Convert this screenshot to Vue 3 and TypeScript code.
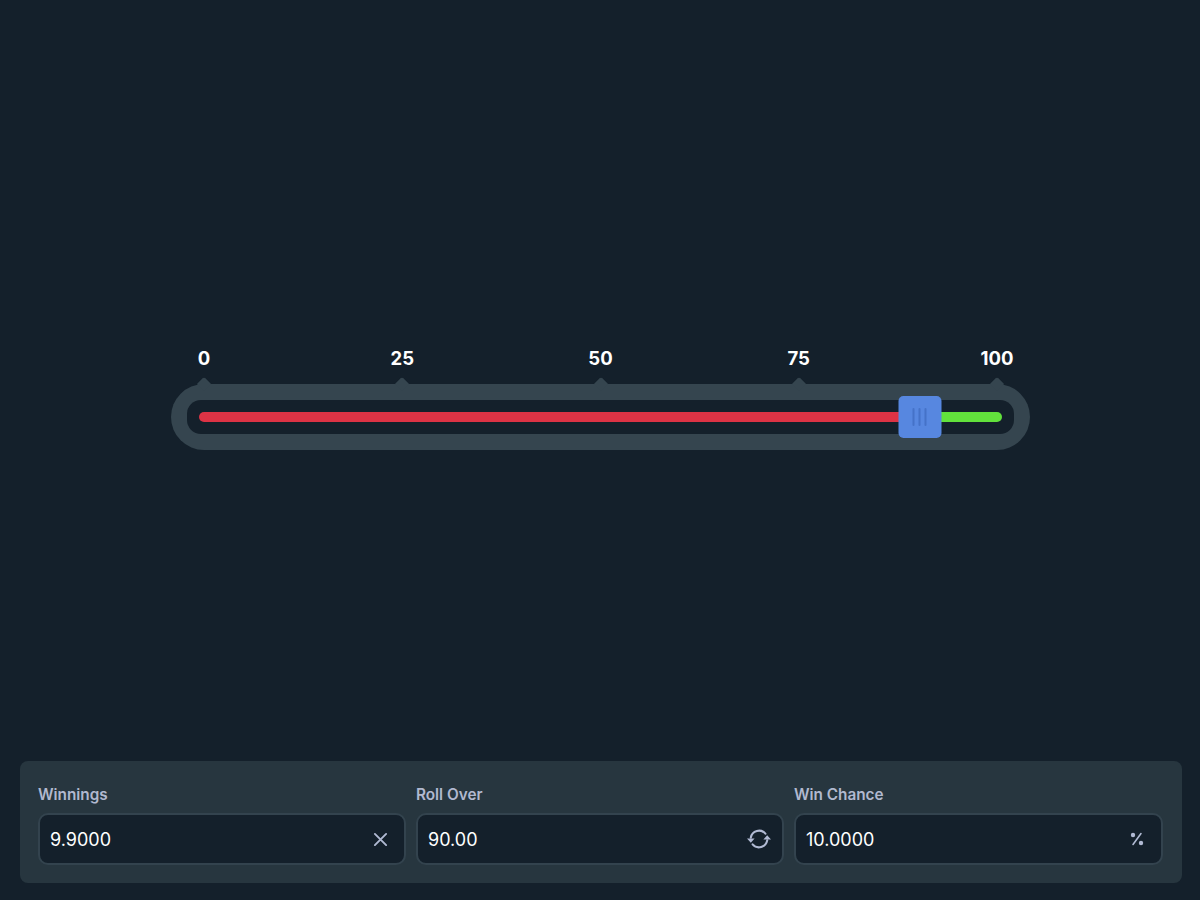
<script setup lang="ts">
const ticks: number[] = [0, 25, 50, 75, 100]
const rollOver = 90
const handlePosition = rollOver * 0.9972
const fields = [
  { label: 'Winnings', value: '9.9000', icon: 'times' },
  { label: 'Roll Over', value: '90.00', icon: 'sync' },
  { label: 'Win Chance', value: '10.0000', icon: 'percent' },
]
</script>

<template>
  <div class="page">
    <main class="game">
      <div class="scale">
        <div v-for="t in ticks" :key="t" class="tick">
          <span class="tick-label">{{ t }}</span>
          <span class="tick-mark"></span>
        </div>
      </div>
      <div class="ring">
        <div class="groove">
          <div class="track">
            <div class="lose" :style="{ flexGrow: rollOver }"></div>
            <div class="win" :style="{ flexGrow: 100 - rollOver }"></div>
            <div class="handle" :style="{ left: handlePosition + '%' }">
              <i></i><i></i><i></i>
            </div>
          </div>
        </div>
      </div>
    </main>
    <section class="panel">
      <div v-for="f in fields" :key="f.label" class="field">
        <label class="field-label">{{ f.label }}</label>
        <div class="input">
          <span class="value">{{ f.value }}</span>
          <svg v-if="f.icon === 'times'" class="icon" viewBox="0 0 16 16" fill="none" stroke="currentColor" stroke-width="2" stroke-linecap="round">
            <path d="M2 2l12 12M14 2L2 14" />
          </svg>
          <svg v-else-if="f.icon === 'sync'" class="icon sync" viewBox="0 0 24 24" fill="none">
            <path d="M3.8 10.6A8.4 8.4 0 0 1 18.4 6.6" stroke="currentColor" stroke-width="2.1" stroke-linecap="round" />
            <path d="M20.2 13.4A8.4 8.4 0 0 1 5.6 17.4" stroke="currentColor" stroke-width="2.1" stroke-linecap="round" />
            <path d="M0 11.4h7.6L3.8 15.8zM24 12.6h-7.6l3.8-4.4z" fill="currentColor" />
          </svg>
          <svg v-else class="icon percent" viewBox="0 0 14 14" fill="none">
            <circle cx="3" cy="3" r="2.2" fill="currentColor" />
            <circle cx="11" cy="11" r="2.2" fill="currentColor" />
            <path d="M11 1.6L3 12.4" stroke="currentColor" stroke-width="1.6" stroke-linecap="round" />
          </svg>
        </div>
      </div>
    </section>
  </div>
</template>

<style>
html, body { margin: 0; background: #14202b; }
</style>

<style scoped>
.page {
  box-sizing: border-box;
  width: 1200px;
  height: 900px;
  display: flex;
  flex-direction: column;
  background: #14202b;
  padding: 0 18px 17px 20px;
  font-family: Inter, "Open Sans", sans-serif;
}
.game {
  flex: 1;
  padding: 347px 152px 0 151px;
  display: flex;
  flex-direction: column;
}
.scale {
  display: flex;
  justify-content: space-between;
  padding: 0 33px;
}
.tick {
  width: 0;
  display: flex;
  flex-direction: column;
  align-items: center;
  position: relative;
  height: 37px;
}
.tick-label {
  font-size: 18.5px;
  line-height: 22px;
  font-weight: 700;
  color: #fff;
  white-space: nowrap;
}
.tick-mark {
  position: absolute;
  bottom: -5px;
  width: 10px;
  height: 10px;
  background: #35454f;
  border-radius: 2px 0 0 0;
  transform: rotate(45deg);
}
.ring {
  background: #35454f;
  height: 66px;
  border-radius: 33px;
  padding: 16px;
  box-sizing: border-box;
}
.groove {
  height: 34px;
  background: #14202b;
  border-radius: 14px;
  padding: 12px;
  box-sizing: border-box;
}
.track {
  position: relative;
  height: 10px;
  display: flex;
  border-radius: 5px;
}
.lose {
  flex: 1 1 0;
  background: #dd3345;
  border-radius: 5px 0 0 5px;
}
.win {
  flex: 1 1 0;
  background: #62e23c;
  border-radius: 0 5px 5px 0;
}
.handle {
  position: absolute;
  top: -16px;
  width: 43px;
  height: 42px;
  transform: translateX(-50%);
  background: #5787e0;
  border-radius: 5px;
  display: flex;
  justify-content: center;
  align-items: center;
  gap: 4px;
}
.handle i {
  width: 2px;
  height: 18px;
  background: #4572c8;
  border-radius: 1px;
}
.panel {
  height: 122px;
  box-sizing: border-box;
  background: #27363f;
  border-radius: 8px;
  padding: 24px 19px 18px 18px;
  display: grid;
  grid-template-columns: 368px 368px 1fr;
  gap: 10px;
}
.field {
  display: flex;
  flex-direction: column;
}
.field-label {
  font-size: 15.3px;
  line-height: 20px;
  font-weight: 600;
  color: #b1b9cf;
  margin-bottom: 8px;
}
.input {
  box-sizing: border-box;
  height: 52px;
  border: 2px solid #33434e;
  border-radius: 10px;
  background: #14202b;
  display: flex;
  align-items: center;
  justify-content: space-between;
  padding: 0 16px 0 10px;
  color: #b1bad3;
}
.value {
  font-size: 18px;
  color: #fff;
}
.icon { width: 15px; height: 15px; }
.sync { width: 24px; height: 24px; margin-right: -5px; }
.percent { width: 14px; height: 14px; margin-right: 1px; }
</style>
